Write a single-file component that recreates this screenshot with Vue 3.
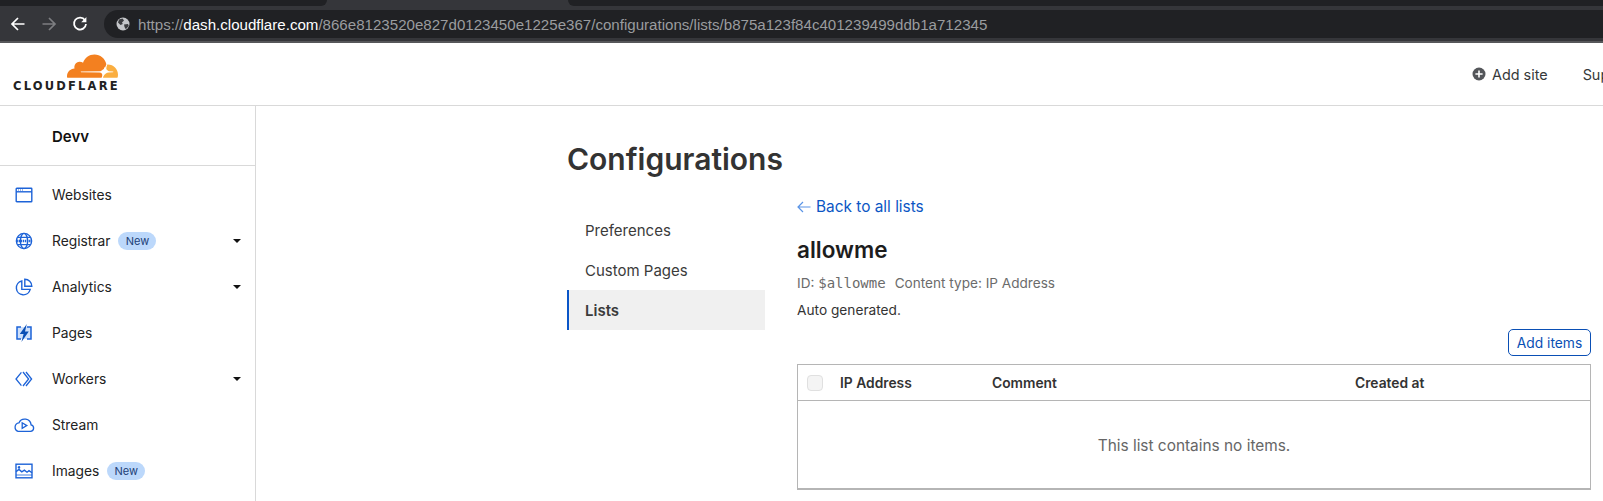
<script setup>
const navItems = [
  { label: 'Websites', icon: 'websites' },
  { label: 'Registrar', icon: 'registrar', badge: true, caret: true },
  { label: 'Analytics', icon: 'analytics', caret: true },
  { label: 'Pages', icon: 'pages' },
  { label: 'Workers', icon: 'workers', caret: true },
  { label: 'Stream', icon: 'stream' },
  { label: 'Images', icon: 'images', badge: true },
]

const subNav = ['Preferences', 'Custom Pages', 'Lists']
</script>

<template>
  <div class="page">
    <div class="browser">
      <div class="tabs">
        <div class="tab tab--left"></div>
        <div class="tab tab--right"></div>
      </div>
      <div class="toolbar">
        <svg class="tool" viewBox="0 0 16 16" fill="none" stroke="#fff" stroke-width="1.7">
          <path d="M14.5 8H2M8 2 2 8l6 6" />
        </svg>
        <svg class="tool" viewBox="0 0 16 16" fill="none" stroke="#7d7e81" stroke-width="1.7">
          <path d="M1.5 8H14M8 2l6 6-6 6" />
        </svg>
        <svg class="tool" viewBox="0 0 16 16" fill="none" stroke="#fff" stroke-width="1.8">
          <path d="M13 4.2A6 6 0 1 0 14 8" />
          <path d="M14.4 1v5.2H9.2z" fill="#fff" stroke="none" />
        </svg>
        <div class="address">
          <svg class="globe" viewBox="0 0 14 14">
            <circle cx="7" cy="7" r="6.5" fill="#c4c6c9" />
            <path d="M3 2.5 6.5 1.5 8 3.5 6 5.5 6.8 7 4.5 8 2 5.5zM8 7.5l4-.5.8 2-3 3.2L8.5 10z" fill="#3b3c3f" />
          </svg>
          <span class="url"><span class="url-dim">https://</span><span class="url-host">dash.cloudflare.com</span><span class="url-dim">/866e8123520e827d0123450e1225e367/configurations/lists/b875a123f84c401239499ddb1a712345</span></span>
        </div>
      </div>
    </div>

    <header class="topbar">
      <div class="logo">
        <svg class="logo__cloud" viewBox="0 6.4 24 11.1">
          <path fill="#f38020" d="M16.5088 16.8447c.1475-.5068.0908-.9707-.1553-1.3154-.2246-.3164-.6045-.499-1.0615-.5205l-8.6592-.1123a.1559.1559 0 0 1-.1333-.0713c-.0283-.042-.0351-.0986-.021-.1553.0278-.084.1123-.1484.2036-.1562l8.7359-.1123c1.0351-.0489 2.1601-.8868 2.5537-1.9136l.499-1.3013c.0215-.0561.0293-.1128.0147-.168-.5625-2.5463-2.835-4.4453-5.5499-4.4453-2.5039 0-4.6284 1.6177-5.3876 3.8614-.4927-.3658-1.1187-.5625-1.794-.499-1.2026.119-2.1665 1.083-2.2861 2.2856-.0283.31-.0069.6128.0635.894C1.5683 13.171 0 14.7754 0 16.752c0 .1748.0142.3515.0352.5273.0141.083.0844.1475.1689.1475h15.9814c.0909 0 .1758-.0645.2032-.1553l.12-.4268z" />
          <path fill="#faae40" d="M19.2656 11.2813c-.0771 0-.1611 0-.2383.0112-.0566 0-.1054.0415-.127.0976l-.3378 1.1744c-.1475.5068-.0918.9707.1543 1.3164.2256.3164.6055.498 1.0625.5195l1.8437.1133c.0557 0 .1055.0263.1329.0703.0283.043.0351.1074.0214.1562-.0283.084-.1132.1485-.204.1553l-1.921.1123c-1.041.0488-2.1582.8867-2.5527 1.914l-.1406.3585c-.0283.0713.0215.1416.0986.1416h6.5977c.0771 0 .1474-.0489.169-.126.1122-.4082.1757-.837.1757-1.2803 0-2.6025-2.125-4.727-4.7344-4.727" />
          <path fill="#fff" d="M17.7 12.3l.45 1.25 1.25.45-1.25.45-.45 1.25-.45-1.25-1.25-.45 1.25-.45z" />
        </svg>
        <div class="logo__text">CLOUDFLARE</div>
      </div>
      <div class="topbar__links">
        <span class="add-site">
          <svg class="add-site__icon" viewBox="0 0 14 14">
            <circle cx="7" cy="7" r="6.5" fill="#54565a" />
            <path d="M7 3.4v7.2M3.4 7h7.2" stroke="#fff" stroke-width="1.6" />
          </svg>
          Add site
        </span>
        <span class="support">Support</span>
      </div>
    </header>

    <div class="layout">
      <aside class="sidebar">
        <div class="account">Devv</div>
        <nav class="nav">
          <div v-for="item in navItems" :key="item.label" class="nav__item">
            <span class="nav__icon">
              <svg v-if="item.icon === 'websites'" viewBox="0 0 18 16" fill="none" stroke="#1d63d8" stroke-width="1.4">
                <rect x="1.2" y="1.2" width="15.6" height="13.6" rx=".6" />
                <path d="M1.2 4.8h15.6" />
                <path d="M3 3h1M5 3h1M7 3h1" stroke-width=".9" />
              </svg>
              <svg v-else-if="item.icon === 'registrar'" viewBox="0 0 18 18" fill="none" stroke="#1d63d8" stroke-width="1.4">
                <circle cx="9" cy="9" r="7.6" />
                <ellipse cx="9" cy="9" rx="3.6" ry="7.6" />
                <path d="M2.4 5.4h13.2M2.4 12.6h13.2" />
                <path d="M1.5 9h15" stroke-width="2.6" stroke-dasharray="1.4 .7" />
              </svg>
              <svg v-else-if="item.icon === 'analytics'" viewBox="0 0 18 18" fill="none" stroke="#1d63d8" stroke-width="1.4">
                <path d="M6.8 3a7 7 0 1 0 8.4 8.4H6.8z" />
                <path d="M9.8 1.2a7 7 0 0 1 7 7h-7z" />
              </svg>
              <svg v-else-if="item.icon === 'pages'" viewBox="0 0 18 18">
                <path d="M2 3h14v12H2z" fill="#cfe0fa" />
                <path d="M6 3H2v12h4M12 3h4v12h-4" fill="none" stroke="#1d63d8" stroke-width="1.5" />
                <path d="M11.8 0 4.8 10h3.8L6.4 18l7.4-10.4H10z" fill="#0a4fb5" />
              </svg>
              <svg v-else-if="item.icon === 'workers'" viewBox="0 0 18 18" fill="none" stroke="#1d63d8" stroke-width="1.3">
                <path d="M6.4 2.4 1 9l5.4 6.6" />
                <path d="M8 2l5.6 7L8 16" />
                <path d="M11 2l5.6 7-5.6 7" />
              </svg>
              <svg v-else-if="item.icon === 'stream'" class="icon--wide" viewBox="0 0 22 16" fill="none" stroke="#1d63d8" stroke-width="1.3">
                <path d="M5 14.4h12.5a3.3 3.3 0 0 0 .6-6.5 6.4 6.4 0 0 0-12.2-2A4.4 4.4 0 0 0 5 14.4z" />
                <path d="M9.2 5.8v5.6l4.6-2.8z" />
              </svg>
              <svg v-else viewBox="0 0 18 16" fill="none" stroke="#1d63d8" stroke-width="1.4">
                <rect x="1" y="1.2" width="16" height="13.6" />
                <path d="M1 8.6l3-2.2 2.8 2.4 2.6-1.6 2.6 2 2-1.6 3 2.2" />
                <circle cx="4" cy="4.4" r=".6" fill="#1d63d8" />
                <path d="M1 12h16" stroke-width=".8" />
              </svg>
            </span>
            <span class="nav__label">{{ item.label }}</span>
            <span v-if="item.badge" class="badge">New</span>
            <span v-if="item.caret" class="caret"></span>
          </div>
        </nav>
      </aside>

      <main class="main">
        <h1 class="title">Configurations</h1>
        <div class="columns">
          <div class="subnav">
            <div
              v-for="entry in subNav"
              :key="entry"
              class="subnav__item"
              :class="{ 'subnav__item--active': entry === 'Lists' }"
            >
              {{ entry }}
            </div>
          </div>

          <section class="detail">
            <a class="back">
              <svg class="back__arrow" viewBox="0 0 14 12" fill="none" stroke="#5a94e6" stroke-width="1.2">
                <path d="M13.5 6H1M6 1 1 6l5 5" />
              </svg>
              Back to all lists
            </a>
            <h2 class="name">allowme</h2>
            <div class="meta">
              ID: <code class="meta__code">$allowme</code><span class="meta__type">Content type: IP Address</span>
            </div>
            <div class="desc">Auto generated.</div>
            <div class="actions">
              <button type="button" class="add-items">Add items</button>
            </div>
            <div class="table">
              <div class="table__head">
                <span class="checkbox"></span>
                <span class="col col--ip">IP Address</span>
                <span class="col col--comment">Comment</span>
                <span class="col">Created at</span>
              </div>
              <div class="table__empty">This list contains no items.</div>
            </div>
          </section>
        </div>
      </main>
    </div>
  </div>
</template>

<style scoped>
.page {
  width: 1603px;
  height: 501px;
  overflow: hidden;
  background: #fff;
  color: #222;
  font-family: Inter, "Noto Sans", sans-serif;
}

.browser {
  height: 43px;
  background: #35363a;
  border-bottom: 2px solid #56575a;
  box-sizing: border-box;
}

.tabs {
  height: 6px;
  display: flex;
  justify-content: space-between;
}

.tab {
  height: 6px;
  background: #202124;
}

.tab--left {
  width: 327px;
  border-bottom-right-radius: 6px;
}

.tab--right {
  width: 1035px;
  border-bottom-left-radius: 6px;
}

.toolbar {
  height: 28px;
  margin-top: 4px;
  display: flex;
  align-items: center;
  padding-left: 10px;
}

.tool {
  width: 16px;
  height: 16px;
  margin-right: 15px;
  flex: none;
}

.address {
  flex: 1;
  height: 28px;
  margin-left: 1px;
  border-radius: 14px 0 0 14px;
  background: #202124;
  display: flex;
  align-items: center;
  padding-left: 12px;
}

.globe {
  width: 14px;
  height: 14px;
  margin-right: 8px;
  flex: none;
}

.url {
  font-family: "Liberation Sans", Arial, sans-serif;
  font-size: 15.1px;
  white-space: nowrap;
}

.url-dim {
  color: #9a9c9f;
}

.url-host {
  color: #fff;
}

.topbar {
  height: 62px;
  border-bottom: 1px solid #d9d9d9;
  display: flex;
  align-items: center;
  justify-content: space-between;
  padding-left: 13px;
}

.logo {
  width: 105px;
  display: flex;
  flex-direction: column;
  align-items: flex-end;
  padding-bottom: 3px;
}

.logo__cloud {
  width: 51px;
  height: 24px;
  display: block;
}

.logo__text {
  width: 105px;
  margin-top: 3px;
  font-family: "DejaVu Sans", sans-serif;
  font-size: 11.5px;
  line-height: 10px;
  font-weight: 700;
  letter-spacing: 2.2px;
  white-space: nowrap;
  color: #222;
}

.topbar__links {
  display: flex;
  align-items: center;
  font-size: 14.4px;
  color: #36393a;
  white-space: nowrap;
  margin-right: -34px;
}

.add-site {
  display: flex;
  align-items: center;
  gap: 6px;
  margin-right: 35px;
}

.add-site__icon {
  width: 14px;
  height: 14px;
}

.layout {
  display: flex;
  height: 395px;
}

.sidebar {
  width: 256px;
  flex: none;
  border-right: 1px solid #d9d9d9;
  box-sizing: border-box;
}

.account {
  height: 60px;
  box-sizing: border-box;
  border-bottom: 1px solid #d9d9d9;
  padding: 21px 0 0 52px;
  font-size: 15px;
  line-height: 20px;
  font-weight: 600;
  color: #111;
}

.nav {
  padding-top: 6px;
}

.nav__item {
  height: 46px;
  display: flex;
  align-items: center;
  padding-right: 14px;
  font-size: 13.8px;
  color: #222;
}

.nav__icon {
  width: 52px;
  flex: none;
  display: flex;
  justify-content: center;
  box-sizing: border-box;
  padding-right: 5px;
}

.nav__icon svg {
  width: 18px;
  height: 18px;
  display: block;
}

.nav__icon .icon--wide {
  width: 22px;
}

.badge {
  margin-left: 8px;
  height: 18px;
  width: 38px;
  border-radius: 9px;
  background: #bcd8fb;
  color: #1d3f77;
  font-size: 11px;
  line-height: 18px;
  text-align: center;
}

.caret {
  margin-left: auto;
  width: 0;
  height: 0;
  border-left: 4.5px solid transparent;
  border-right: 4.5px solid transparent;
  border-top: 4.5px solid #111;
}

.main {
  flex: 1;
  min-width: 0;
  padding: 31px 12px 0 311px;
}

.title {
  margin: 0;
  font-size: 30px;
  line-height: 44px;
  font-weight: 600;
  color: #333;
}

.columns {
  display: flex;
  gap: 32px;
  margin-top: 9px;
}

.subnav {
  width: 198px;
  flex: none;
  padding-top: 20px;
}

.subnav__item {
  height: 40px;
  display: flex;
  align-items: center;
  padding-left: 18px;
  font-size: 15px;
  color: #3b3b3b;
}

.subnav__item--active {
  background: #f0f0f0;
  border-left: 2px solid #0a55c8;
  padding-left: 16px;
  font-weight: 600;
}

.detail {
  flex: 1;
  min-width: 0;
  padding-top: 6px;
}

.back {
  display: flex;
  align-items: center;
  gap: 5px;
  height: 22px;
  line-height: 22px;
  font-size: 15.4px;
  color: #0b56c4;
}

.back__arrow {
  width: 14px;
  height: 12px;
}

.name {
  margin: 19px 0 0;
  font-size: 22.5px;
  line-height: 26px;
  font-weight: 600;
  color: #1d1d1d;
}

.meta {
  margin-top: 10px;
  height: 20px;
  line-height: 20px;
  font-size: 13.6px;
  color: #6b6b6b;
}

.meta__code {
  font-family: "DejaVu Sans Mono", monospace;
  font-size: 14px;
}

.meta__type {
  margin-left: 9px;
}

.desc {
  margin-top: 7px;
  height: 20px;
  line-height: 20px;
  font-size: 13.7px;
  color: #333;
}

.actions {
  display: flex;
  justify-content: flex-end;
  margin-top: 9px;
}

.add-items {
  width: 83px;
  height: 27px;
  padding: 0;
  border: 1px solid #0a4fb5;
  border-radius: 5px;
  background: #fff;
  color: #0a4fb5;
  font-family: inherit;
  font-size: 13.8px;
}

.table {
  margin-top: 8px;
  border: 1px solid #b5b5b5;
  border-bottom-width: 2px;
  box-sizing: border-box;
  height: 126px;
}

.table__head {
  height: 35px;
  display: flex;
  align-items: center;
  padding-left: 9px;
  border-bottom: 1px solid #b5b5b5;
  font-size: 13.8px;
  font-weight: 600;
  color: #333;
}

.checkbox {
  width: 16px;
  height: 16px;
  box-sizing: border-box;
  border: 1px solid #e0e0e0;
  border-radius: 4px;
  background: #f4f4f4;
  margin-right: 17px;
}

.col--ip {
  width: 152px;
}

.col--comment {
  width: 363px;
}

.table__empty {
  height: 88px;
  display: flex;
  align-items: center;
  justify-content: center;
  font-size: 15.4px;
  color: #666;
}
</style>

<style>
html,
body {
  margin: 0;
  overflow: hidden;
}
</style>
